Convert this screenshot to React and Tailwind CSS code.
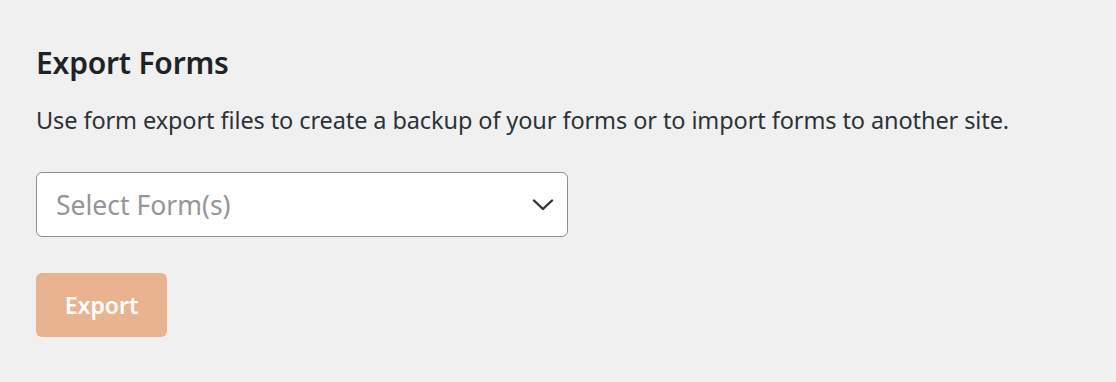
export default function App() {
  return (
    <div className="w-[1116px] h-[382px] bg-[#f0f0f1] pl-[36px] pt-[43px]" style={{ fontFamily: '"Noto Sans", "Open Sans", sans-serif' }}>
      <h2 className="text-[30px] leading-[40px] font-semibold text-[#1d2327] tracking-[-0.2px]">Export Forms</h2>
      <p className="mt-[21px] text-[23.5px] leading-[32px] text-[#2c3338] tracking-[-0.1px] whitespace-nowrap">Use form export files to create a backup of your forms or to import forms to another site.</p>
      <div className="mt-[36px] w-[532px] h-[65px] bg-white border border-[#8c8f94] rounded-[6px] flex items-center justify-between pl-[19px] pr-[13px]">
        <span className="text-[26.5px] text-[#949699] pt-[3px]">Select Form(s)</span>
        <svg width="22" height="12" viewBox="0 0 22 12" fill="none">
          <path d="M2 1.5 L11 10 L20 1.5" stroke="#2c3338" strokeWidth="2.4" strokeLinecap="round" strokeLinejoin="round" />
        </svg>
      </div>
      <button className="mt-[36px] w-[131px] h-[64px] rounded-[6px] bg-[#eab38f] text-white text-[23px] font-semibold flex items-center justify-center">Export</button>
    </div>
  );
}
